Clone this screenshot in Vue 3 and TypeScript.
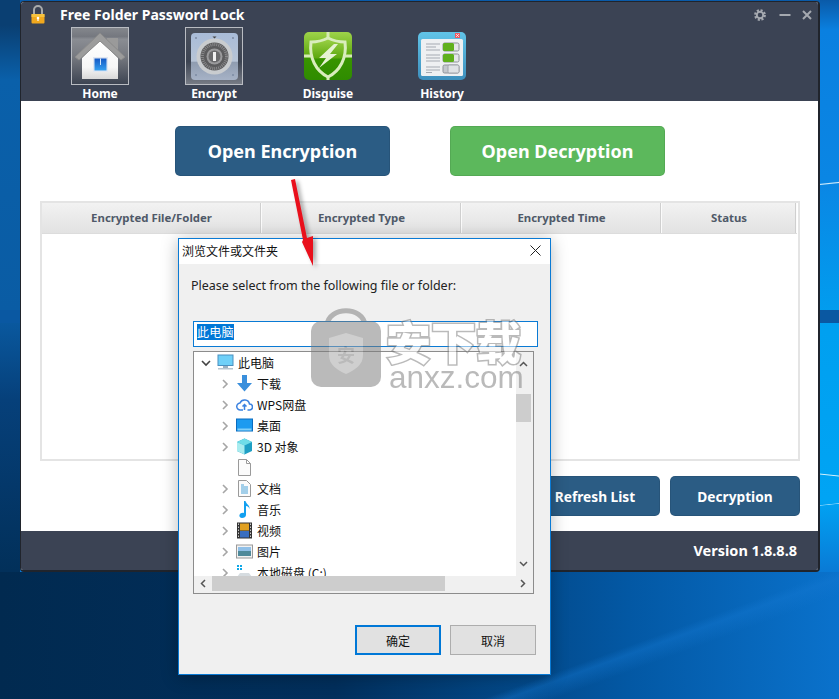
<script setup lang="ts">
// Screenshot recreation: folder lock app with a browse dialog on top of it
const tabs = [
  { key: 'home', label: 'Home' },
  { key: 'encrypt', label: 'Encrypt' },
  { key: 'disguise', label: 'Disguise' },
  { key: 'history', label: 'History' },
];

const columns = ['Encrypted File/Folder', 'Encrypted Type', 'Encrypted Time', 'Status'];

const treeRows = [
  { icon: 'download', label: '下载', arrow: true },
  { icon: 'cloud', label: 'WPS网盘', arrow: true },
  { icon: 'desktop', label: '桌面', arrow: true },
  { icon: 'cube', label: '3D 对象', arrow: true },
  { icon: 'blank', label: '', arrow: false },
  { icon: 'doc', label: '文档', arrow: true },
  { icon: 'music', label: '音乐', arrow: true },
  { icon: 'video', label: '视频', arrow: true },
  { icon: 'picture', label: '图片', arrow: true },
  { icon: 'disk', label: '本地磁盘 (C:)', arrow: true },
];
</script>

<template>
  <div class="desktop">
    <div class="window">
      <header class="app-header">
        <div class="title-row">
          <svg class="lock-icon" viewBox="0 0 14 19">
            <path d="M3 9V5a4 4 0 0 1 8 0v4" fill="none" stroke="#a9abab" stroke-width="2" />
            <rect x="0.5" y="9" width="13" height="9.5" rx="1" fill="#f0a81e" />
            <rect x="0.5" y="9" width="13" height="3" fill="#f7c23c" />
            <circle cx="7" cy="13" r="1.3" fill="#fff" />
            <rect x="6.4" y="13" width="1.2" height="3" fill="#fff" />
          </svg>
          <span class="app-title">Free Folder Password Lock</span>
          <div class="win-controls">
            <svg width="12" height="12" viewBox="0 0 12 12">
              <circle cx="6" cy="6" r="4.6" fill="none" stroke="#a5a9b0" stroke-width="2.6" stroke-dasharray="2 1.61" />
              <circle cx="6" cy="6" r="3.2" fill="none" stroke="#a5a9b0" stroke-width="1.9" />
            </svg>
            <svg width="12" height="12" viewBox="0 0 12 12">
              <rect x="0.5" y="5" width="11" height="2" fill="#a5a9b0" />
            </svg>
            <svg class="win-close" width="10" height="10" viewBox="0 0 10 10">
              <path d="M1 1l8 8M9 1l-8 8" stroke="#a5a9b0" stroke-width="2" />
            </svg>
          </div>
        </div>

        <nav class="nav-row">
          <div v-for="tab in tabs" :key="tab.key" class="nav-tab">
            <div class="nav-icon" :class="{ boxed: tab.key === 'home' || tab.key === 'encrypt' }">
              <svg v-if="tab.key === 'home'" width="56" height="56" viewBox="0 0 56 56">
                <defs>
                  <linearGradient id="homeBg" x1="0" y1="0" x2="0" y2="1">
                    <stop offset="0" stop-color="#84878d" />
                    <stop offset="0.15" stop-color="#75787f" />
                    <stop offset="0.2" stop-color="#8a8d93" />
                    <stop offset="0.5" stop-color="#777a81" />
                    <stop offset="1" stop-color="#3d4452" />
                  </linearGradient>
                  <linearGradient id="winBlue" x1="0" y1="0" x2="0" y2="1">
                    <stop offset="0" stop-color="#1458c4" />
                    <stop offset="1" stop-color="#35a0f0" />
                  </linearGradient>
                  <linearGradient id="wall" x1="0" y1="0" x2="0" y2="1">
                    <stop offset="0" stop-color="#ffffff" />
                    <stop offset="0.7" stop-color="#f6f6f6" />
                    <stop offset="1" stop-color="#d8d8d8" />
                  </linearGradient>
                </defs>
                <rect width="56" height="56" fill="url(#homeBg)" />
                <rect x="35" y="10" width="11" height="14" fill="#9a9a9a" />
                <path d="M10 30L28 12l18 18v21H10z" fill="url(#wall)" />
                <path d="M3 29L28 5l25 24-4 3L28 13 7 32z" fill="#9c9c9c" stroke="#8a8a8a" stroke-width="1" stroke-linejoin="round" />
                <rect x="21" y="29" width="15" height="15" fill="#dfe6f2" />
                <rect x="22.5" y="30.5" width="12" height="12" fill="url(#winBlue)" />
                <rect x="28" y="30.5" width="1" height="6.5" fill="#d5e6fa" />
              </svg>

              <svg v-else-if="tab.key === 'encrypt'" width="56" height="56" viewBox="0 0 56 56">
                <defs>
                  <linearGradient id="encBg" x1="0" y1="0" x2="0" y2="1">
                    <stop offset="0" stop-color="#4a505c" />
                    <stop offset="0.6" stop-color="#3d4452" />
                    <stop offset="1" stop-color="#767b85" />
                  </linearGradient>
                  <linearGradient id="plate" x1="0" y1="0" x2="0" y2="1">
                    <stop offset="0" stop-color="#a9bcd8" />
                    <stop offset="0.6" stop-color="#b7c4d6" />
                    <stop offset="0.62" stop-color="#8f9cb0" />
                    <stop offset="1" stop-color="#a6b2c6" />
                  </linearGradient>
                </defs>
                <rect width="56" height="56" fill="url(#encBg)" />
                <rect x="5" y="5" width="47" height="47" rx="4" fill="url(#plate)" />
                <circle cx="28.5" cy="28.5" r="18" fill="#c9cccf" />
                <circle cx="28.5" cy="28.5" r="14" fill="#5b5b5d" />
                <circle cx="28.5" cy="28.5" r="12" fill="none" stroke="#8a8a8c" stroke-width="3" stroke-dasharray="1 1" />
                <circle cx="28.5" cy="28.5" r="8" fill="#9a9a9c" />
                <circle cx="28.5" cy="28.5" r="6" fill="#6a6a6c" />
                <rect x="27" y="24" width="3" height="9" fill="#f0f0f0" />
                <path d="M26.5 8.5h4l-2 2z" fill="#444" />
                <g fill="#7d8ba3">
                  <circle cx="10" cy="10" r="1" /><circle cx="47" cy="10" r="1" />
                  <circle cx="10" cy="47" r="1" /><circle cx="47" cy="47" r="1" />
                </g>
              </svg>

              <svg v-else-if="tab.key === 'disguise'" width="48" height="48" viewBox="0 0 48 48">
                <defs>
                  <linearGradient id="greenBg" x1="0" y1="0" x2="0" y2="1">
                    <stop offset="0" stop-color="#9ed34a" />
                    <stop offset="0.5" stop-color="#5ea90f" />
                    <stop offset="0.55" stop-color="#389400" />
                    <stop offset="1" stop-color="#2f8c00" />
                  </linearGradient>
                </defs>
                <rect width="48" height="48" rx="5" fill="url(#greenBg)" />
                <path d="M24 0v48M0 24h48" stroke="#d6ebb4" stroke-width="3" />
                <path d="M24 6c6 3 11 4 17 4 2 16-5 29-17 35C12 39 5 26 7 10c6 0 11-1 17-4z" fill="url(#greenBg)" stroke="#d9edbd" stroke-width="3" />
                <path d="M30 12L15 26h7l-7 10 18-14h-7l8-10z" fill="#e6f3d2" />
              </svg>

              <svg v-else width="48" height="48" viewBox="0 0 48 48">
                <defs>
                  <linearGradient id="histBg" x1="0" y1="0" x2="0" y2="1">
                    <stop offset="0" stop-color="#61c4e8" />
                    <stop offset="1" stop-color="#3d8fbd" />
                  </linearGradient>
                </defs>
                <rect width="48" height="48" rx="5" fill="url(#histBg)" />
                <rect x="3" y="7" width="42" height="37" rx="1.5" fill="#eef0f2" />
                <rect x="37" y="1" width="5" height="5" fill="#ee5a63" />
                <path d="M38 2l3 3M41 2l-3 3" stroke="#fff" stroke-width="0.7" />
                <path d="M8 12h14M8 15h10M8 18h14M8 23h14M8 26h14M8 29h14M8 35h14M8 38h14M8 40.5h6" stroke="#a5aab2" stroke-width="1" />
                <rect x="25" y="11" width="16" height="8" rx="1.5" fill="#e4e6e9" stroke="#8d929a" />
                <rect x="25" y="11" width="11" height="8" rx="1.5" fill="#5fb01c" />
                <rect x="25" y="22" width="16" height="8" rx="1.5" fill="#e4e6e9" stroke="#8d929a" />
                <rect x="25" y="22" width="11" height="8" rx="1.5" fill="#5fb01c" />
                <rect x="25" y="33" width="16" height="8" rx="1.5" fill="#c4c8ce" stroke="#8d929a" />
                <rect x="30" y="33" width="11" height="8" rx="1.5" fill="#dfe2e6" stroke="#a0a4ab" />
              </svg>
            </div>
            <span class="nav-label">{{ tab.label }}</span>
          </div>
        </nav>
      </header>

      <main class="app-main">
        <div class="open-row">
          <button class="open-btn blue">Open Encryption</button>
          <button class="open-btn green">Open Decryption</button>
        </div>

        <div class="file-table">
          <div class="table-head">
            <div v-for="col in columns" :key="col" class="table-cell">{{ col }}</div>
          </div>
        </div>

        <div class="action-row">
          <button class="action-btn">Refresh List</button>
          <button class="action-btn">Decryption</button>
        </div>
      </main>

      <footer class="app-footer">Version 1.8.8.8</footer>
    </div>

    <!-- Browse dialog -->
    <div class="dialog">
      <div class="dialog-title">
        <span>浏览文件或文件夹</span>
        <svg width="11" height="11" viewBox="0 0 11 11">
          <path d="M0.5 0.5l10 10M10.5 0.5l-10 10" stroke="#222" stroke-width="1" />
        </svg>
      </div>
      <div class="dialog-body">
        <p class="dialog-label">Please select from the following file or folder:</p>
        <div class="path-input"><span class="path-selected">此电脑</span></div>

        <div class="tree">
          <div class="tree-view">
            <div class="tree-row root">
              <svg class="chevron" width="10" height="10" viewBox="0 0 10 10">
                <path d="M1 3l4 4 4-4" fill="none" stroke="#444" stroke-width="1.6" />
              </svg>
              <svg class="row-icon" width="17" height="17" viewBox="0 0 17 17">
                <rect x="1" y="1" width="15" height="10.5" fill="#6fd0f8" stroke="#4a90c0" />
                <rect x="6" y="12" width="5" height="2" fill="#9bb0c0" />
                <rect x="1" y="14" width="15" height="1.5" fill="#b7c5d0" />
              </svg>
              <span>此电脑</span>
            </div>
            <div v-for="row in treeRows" :key="row.icon" class="tree-row">
              <svg class="chevron" :class="{ hidden: !row.arrow }" width="10" height="10" viewBox="0 0 10 10">
                <path d="M3 1l4 4-4 4" fill="none" stroke="#a6a6a6" stroke-width="1.6" />
              </svg>
              <svg class="row-icon" width="17" height="17" viewBox="0 0 17 17">
                <path v-if="row.icon === 'download'" d="M6 0h5v8h5l-7.5 8.5L1 8h5z" fill="#3a8fdc" />
                <path v-else-if="row.icon === 'cloud'" d="M4.5 14a3.5 3.5 0 0 1-.5-7 5 5 0 0 1 9.5 1 3 3 0 0 1 0 6h-2M4.5 14H7M6.5 10.5l2-2 2 2M8.5 9v5" fill="none" stroke="#3b82e0" stroke-width="1.5" />
                <g v-else-if="row.icon === 'desktop'">
                  <rect x="0.5" y="2" width="16" height="12" fill="#1c9bf0" stroke="#0a6cc0" />
                  <rect x="1.5" y="11.5" width="14" height="2" fill="#7fd0fa" />
                </g>
                <g v-else-if="row.icon === 'cube'">
                  <path d="M8.5 0.5l7.5 3.5v9l-7.5 3.5L1 13V4z" fill="#1f9fc4" />
                  <path d="M8.5 0.5L16 4l-7.5 3.5L1 4z" fill="#6fdde8" />
                  <path d="M1 4l7.5 3.5v9L1 13z" fill="#a8ecef" />
                </g>
                <path v-else-if="row.icon === 'blank'" d="M2.5 0.5h8l4 4v12h-12zM10.5 0.5v4h4" fill="#fbfbfb" stroke="#9a9a9a" />
                <g v-else-if="row.icon === 'doc'">
                  <path d="M2.5 0.5h8l4 4v12h-12z" fill="#fbfbfb" stroke="#9a9a9a" />
                  <path d="M5 5h3M5 7h7M5 9h7M5 11h7M5 13h7" stroke="#4aa3d8" stroke-width="1" />
                </g>
                <path v-else-if="row.icon === 'music'" d="M8 0h1.5c.5 3 4.5 4 4 8-.5-2-2-3-3.5-3v9c0 2-2 3-4 3s-3-1.5-2.5-3 2.5-2.5 4.5-2z" fill="#12a0f0" />
                <g v-else-if="row.icon === 'video'">
                  <rect x="1" y="0.5" width="15" height="16" fill="#333" />
                  <rect x="4" y="1.5" width="9" height="7" fill="#e0a020" />
                  <rect x="4" y="9" width="9" height="6.5" fill="#3a6ec0" />
                  <path d="M2.5 1.5v14M14.5 1.5v14" stroke="#ccc" stroke-width="1" stroke-dasharray="1.5 1.5" />
                </g>
                <g v-else-if="row.icon === 'picture'">
                  <rect x="0.5" y="2" width="16" height="13" fill="#f2f2f2" stroke="#9a9a9a" />
                  <rect x="2" y="4" width="13" height="4" fill="#90c0e8" />
                  <rect x="2" y="8" width="13" height="5" fill="#4f8a9a" />
                </g>
                <g v-else>
                  <path d="M1 1h2v2H1zM4 1h2v2H4zM1 4h2v2H1zM4 4h2v2H4z" fill="#10a8e8" />
                  <path d="M4 9h9l3 4v3H1v-3z" fill="#d6dce0" />
                </g>
              </svg>
              <span>{{ row.label }}</span>
            </div>
          </div>

          <div class="v-bar">
            <svg class="bar-arrow" width="15" height="10" viewBox="0 0 15 10">
              <path d="M4 7l3.5-3.5L11 7" fill="none" stroke="#555" stroke-width="1.5" />
            </svg>
            <div class="v-thumb"></div>
            <svg class="bar-arrow end" width="15" height="10" viewBox="0 0 15 10">
              <path d="M4 3l3.5 3.5L11 3" fill="none" stroke="#555" stroke-width="1.5" />
            </svg>
          </div>
          <div class="h-bar">
            <svg class="h-arrow" width="17" height="15" viewBox="0 0 17 15">
              <path d="M10 4l-3.5 3.5L10 11" fill="none" stroke="#555" stroke-width="1.5" />
            </svg>
            <div class="h-thumb"></div>
            <svg class="h-arrow end" width="17" height="15" viewBox="0 0 17 15">
              <path d="M7 4l3.5 3.5L7 11" fill="none" stroke="#555" stroke-width="1.5" />
            </svg>
          </div>
        </div>

        <div class="dialog-actions">
          <button class="dlg-btn primary">确定</button>
          <button class="dlg-btn">取消</button>
        </div>
      </div>
    </div>

    <!-- Site watermark, lies over the dialog -->
    <div class="watermark">
      <svg width="72" height="82" viewBox="0 0 72 82">
        <path d="M17 20C19 1 53 1 55 20" fill="none" stroke="#7c7c7c" stroke-width="5" />
        <rect x="1" y="16" width="70" height="66" rx="10" fill="#7c7c7c" />
        <path d="M36 28l17 5v17c0 10-8 15-17 19-9-4-17-9-17-19V33z" fill="#a4a4a4" />
        <text x="36" y="57" text-anchor="middle" font-size="18" font-weight="700" fill="#7c7c7c" font-family="Noto Sans CJK SC">安</text>
      </svg>
      <div class="wm-text">
        <span class="wm-cn">安下载</span>
        <span class="wm-en">anxz.com</span>
      </div>
    </div>

    <!-- Red annotation arrow -->
    <svg class="arrow" width="40" height="100" viewBox="0 0 40 100">
      <polygon points="9,4 13,3 25,62 31,60 31,90 20,66 21,64" fill="#e9101c" />
    </svg>
  </div>
</template>

<style scoped>
.desktop {
  position: relative;
  width: 839px;
  height: 699px;
  overflow: hidden;
  font-family: "Noto Sans", "Noto Sans CJK SC", sans-serif;
  background:
    linear-gradient(174deg, transparent 38%, rgba(235, 250, 255, 0.9) 50%, transparent 62%) right top 180px / 20px 7px no-repeat,
    linear-gradient(186deg, transparent 38%, rgba(235, 250, 255, 0.9) 50%, transparent 62%) right top 472px / 20px 6px no-repeat,
    linear-gradient(174deg, transparent 40%, rgba(190, 235, 255, 0.7) 50%, transparent 60%) right top 502px / 20px 5px no-repeat,
    linear-gradient(#0a58a2, #0a58a2) left 0 top 310px / 100% 13px no-repeat,
    linear-gradient(#0a3f72 0, #0a3f72 25px, #0a60aa 80px, #0a5ca4 310px, #06407a 400px, #02305a 571px) left top / 20px 572px no-repeat,
    linear-gradient(160deg, transparent 70%, rgba(20, 120, 210, 0.4) 72%, transparent 76%) left 0 top 572px / 100% 127px no-repeat,
    linear-gradient(90deg, #012a50 0, #022f5c 40%, #0358a4 75%, #0a72cc 100%) left 0 top 572px / 100% 127px no-repeat,
    linear-gradient(#0a5aa8 0, #0a80e0 30px, #0a86e4 180px, #00a0f0 330px, #00a4f4 500px, #0a78d4 575px);
}

.window {
  position: absolute;
  left: 20px;
  top: 1px;
  width: 800px;
  height: 571px;
  display: flex;
  flex-direction: column;
  box-sizing: border-box;
  border: 1px solid #20242c;
  border-width: 1px 2px 2px 1px;
  border-radius: 4px;
  overflow: hidden;
  background: #fff;
}

.app-header {
  height: 99px;
  background: #3b4354;
  flex-shrink: 0;
}

.title-row {
  display: flex;
  align-items: center;
  height: 25px;
  padding-left: 10px;
}

.lock-icon {
  width: 14px;
  height: 19px;
  margin-top: -1px;
}

.app-title {
  margin-left: 15px;
  color: #fff;
  font-weight: 700;
  font-size: 14px;
  white-space: nowrap;
}

.win-controls {
  margin-left: auto;
  display: flex;
  align-items: center;
  gap: 13px;
  padding-right: 6px;
}

.win-close {
  margin-left: -2px;
}

.nav-row {
  display: flex;
  gap: 56px;
  padding-left: 50px;
}

.nav-tab {
  width: 58px;
  display: flex;
  flex-direction: column;
  align-items: center;
}

.nav-icon {
  width: 58px;
  height: 58px;
  box-sizing: border-box;
  display: flex;
  align-items: center;
  justify-content: center;
}

.nav-icon.boxed {
  border: 1px solid #b9bcc2;
}

.nav-label {
  color: #fff;
  font-weight: 700;
  font-size: 12px;
  line-height: 18px;
  white-space: nowrap;
}

.app-main {
  flex: 1;
  padding: 25px 18px 0 19px;
  min-height: 0;
}

.open-row {
  display: flex;
  justify-content: center;
  gap: 60px;
}

.open-btn {
  width: 215px;
  height: 50px;
  border: 1px solid rgba(0, 0, 0, 0.08);
  border-radius: 5px;
  color: #fff;
  font-family: inherit;
  font-weight: 700;
  font-size: 18px;
}

.open-btn.blue {
  background: #2b5c84;
}

.open-btn.green {
  background: #5cb85c;
}

.file-table {
  margin-top: 25px;
  height: 260px;
  box-sizing: border-box;
  border: 2px solid #e4e4e4;
  padding-right: 1px;
}

.table-head {
  display: grid;
  grid-template-columns: 220px 200px 200px 1fr;
  height: 30px;
  border-bottom: 1px solid #dcdcdc;
}

.table-cell {
  display: flex;
  align-items: center;
  justify-content: center;
  padding-bottom: 2px;
  background: linear-gradient(#f2f2f2, #e2e2e2);
  border-right: 1px solid #fbfbfb;
  box-shadow: inset -1px 0 0 #cfcfcf;
  color: #4f5968;
  font-weight: 700;
  font-size: 11.4px;
}

.action-row {
  display: flex;
  justify-content: flex-end;
  gap: 10px;
  margin-top: 15px;
}

.action-btn {
  width: 130px;
  height: 40px;
  border: 1px solid rgba(0, 0, 0, 0.08);
  border-radius: 5px;
  background: #2b5c84;
  color: #fff;
  font-family: inherit;
  font-weight: 700;
  font-size: 13.7px;
}

.app-footer {
  height: 39px;
  flex-shrink: 0;
  background: #3b4354;
  color: #fff;
  font-weight: 700;
  font-size: 14.5px;
  line-height: 39px;
  text-align: right;
  padding-right: 21px;
}

.dialog {
  position: absolute;
  left: 178px;
  top: 238px;
  width: 373px;
  height: 437px;
  box-sizing: border-box;
  border: 1px solid #0a7ad4;
  background: #f0f0f0;
  box-shadow: 0 2px 16px rgba(0, 0, 0, 0.28);
}

.dialog-title {
  height: 25px;
  box-sizing: border-box;
  background: #fff;
  display: flex;
  align-items: center;
  justify-content: space-between;
  padding: 0 9px 2px 3px;
  font-family: "Noto Sans CJK SC", sans-serif;
  font-size: 12px;
  color: #111;
}

.dialog-body {
  padding: 14px 14px 0 12px;
}

.dialog-label {
  margin: 0;
  font-size: 12.5px;
  line-height: 16px;
  color: #222;
  white-space: nowrap;
}

.path-input {
  margin: 27px -2px 0 2px;
  height: 26px;
  box-sizing: border-box;
  border: 1px solid #0a7ad4;
  background: #fff;
  padding: 2px 3px;
  font-family: "Noto Sans CJK SC", sans-serif;
  font-size: 12px;
  line-height: 16px;
}

.path-selected {
  display: inline-block;
  background: #0078d7;
  color: #fff;
  width: 37px;
  letter-spacing: 0.3px;
}

.tree {
  margin: 4px 2px 0 2px;
  width: 341px;
  height: 243px;
  box-sizing: border-box;
  border: 1px solid #8c8c8c;
  background: #f0f0f0;
  display: grid;
  grid-template-columns: 322px 15px;
  grid-template-rows: 224px 15px;
  padding: 0 2px 1px 0;
}

.tree-view {
  background: #fff;
  overflow: hidden;
}

.tree-row {
  height: 21px;
  display: flex;
  align-items: center;
  padding-left: 26px;
  font-family: "Noto Sans CJK SC", sans-serif;
  font-size: 12px;
  color: #111;
  white-space: nowrap;
}

.tree-row.root {
  padding-left: 7px;
}

.chevron.hidden {
  visibility: hidden;
}

.row-icon {
  margin: 0 4px 0 6px;
  flex-shrink: 0;
}

.v-bar {
  display: flex;
  flex-direction: column;
  align-items: center;
  padding: 7px 0;
  box-sizing: border-box;
}

.v-thumb {
  width: 15px;
  height: 28px;
  margin-top: 25px;
  background: #cdcdcd;
}

.bar-arrow.end {
  margin-top: auto;
}

.h-bar {
  grid-column: 1 / 3;
  display: flex;
  align-items: center;
  margin-left: 1px;
}

.h-thumb {
  width: 233px;
  height: 15px;
  background: #cdcdcd;
}

.h-arrow.end {
  margin-left: auto;
}

.dialog-actions {
  display: flex;
  justify-content: flex-end;
  gap: 9px;
  margin-top: 31px;
}

.dlg-btn {
  width: 86px;
  height: 30px;
  box-sizing: border-box;
  border: 1px solid #adadad;
  background: #e1e1e1;
  color: #111;
  font-family: "Noto Sans CJK SC", sans-serif;
  font-size: 12px;
  padding: 0;
}

.dlg-btn.primary {
  border: 2px solid #0078d7;
}

.watermark {
  position: absolute;
  left: 310px;
  top: 305px;
  display: flex;
  align-items: flex-start;
  gap: 4px;
  opacity: 0.52;
  pointer-events: none;
}

.wm-text {
  display: flex;
  flex-direction: column;
  margin-top: 11px;
  width: 140px;
}

.wm-cn {
  font-family: "Noto Sans CJK SC", sans-serif;
  font-weight: 900;
  font-size: 45px;
  line-height: 50px;
  color: #fff;
  -webkit-text-stroke: 3px #7c7c7c;
  paint-order: stroke fill;
  white-space: nowrap;
}

.wm-en {
  margin-left: 3px;
  margin-top: -4px;
  font-family: "Liberation Sans", sans-serif;
  font-size: 31.5px;
  line-height: 30px;
  color: #7c7c7c;
  white-space: nowrap;
}

.arrow {
  position: absolute;
  left: 282px;
  top: 176px;
  filter: drop-shadow(3px 2px 2px rgba(0, 0, 0, 0.35));
  pointer-events: none;
}
</style>

<style>
html,
body {
  margin: 0;
  overflow: hidden;
}
</style>
